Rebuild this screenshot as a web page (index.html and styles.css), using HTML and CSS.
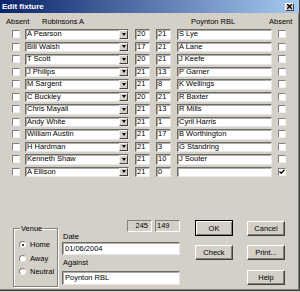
FILE: index.html
```html
<!DOCTYPE html>
<html>
  <head>
    <title>Edit fixture</title>
    <link rel="stylesheet" href="styles.css">
  </head>
  <body>
    <div class="dialog">
      <div class="titlebar">
        <span class="title">Edit fixture</span>
        <span class="close">
          <svg width="5" height="5" viewBox="0 0 5 5"><path d="M0 0L5 5M5 0L0 5" stroke="#000" stroke-width="1.4"/></svg>
        </span>
      </div>

      <div class="header">
        <span class="h-absent">Absent</span>
        <span class="h-home">Robinsons A</span>
        <span class="h-away">Poynton RBL</span>
        <span>Absent</span>
      </div>

      <!-- player rows -->
      <div class="rows">
        <div class="row"><span class="chk"></span><div class="combo field"><span class="combo-text">A Pearson</span><span class="arrow"></span></div><span class="score field">20</span><span class="score field">21</span><span class="name field">S Lye</span><span class="chk"></span></div>
        <div class="row"><span class="chk"></span><div class="combo field"><span class="combo-text">Bill Walsh</span><span class="arrow"></span></div><span class="score field">17</span><span class="score field">21</span><span class="name field">A Lane</span><span class="chk"></span></div>
        <div class="row"><span class="chk"></span><div class="combo field"><span class="combo-text">T Scott</span><span class="arrow"></span></div><span class="score field">20</span><span class="score field">21</span><span class="name field">J Keefe</span><span class="chk"></span></div>
        <div class="row"><span class="chk"></span><div class="combo field"><span class="combo-text">J Philips</span><span class="arrow"></span></div><span class="score field">21</span><span class="score field">13</span><span class="name field">P Garner</span><span class="chk"></span></div>
        <div class="row"><span class="chk"></span><div class="combo field"><span class="combo-text">M Sargent</span><span class="arrow"></span></div><span class="score field">21</span><span class="score field">8</span><span class="name field">K Wellings</span><span class="chk"></span></div>
        <div class="row"><span class="chk"></span><div class="combo field"><span class="combo-text">C Buckley</span><span class="arrow"></span></div><span class="score field">20</span><span class="score field">21</span><span class="name field">R Baxter</span><span class="chk"></span></div>
        <div class="row"><span class="chk"></span><div class="combo field"><span class="combo-text">Chris Mayall</span><span class="arrow"></span></div><span class="score field">21</span><span class="score field">13</span><span class="name field">R Mills</span><span class="chk"></span></div>
        <div class="row"><span class="chk"></span><div class="combo field"><span class="combo-text">Andy White</span><span class="arrow"></span></div><span class="score field">21</span><span class="score field">1</span><span class="name field">Cyril Harris</span><span class="chk"></span></div>
        <div class="row"><span class="chk"></span><div class="combo field"><span class="combo-text">William Austin</span><span class="arrow"></span></div><span class="score field">21</span><span class="score field">17</span><span class="name field">B Worthington</span><span class="chk"></span></div>
        <div class="row"><span class="chk"></span><div class="combo field"><span class="combo-text">H Hardman</span><span class="arrow"></span></div><span class="score field">21</span><span class="score field">3</span><span class="name field">G Standring</span><span class="chk"></span></div>
        <div class="row"><span class="chk"></span><div class="combo field"><span class="combo-text">Kenneth Shaw</span><span class="arrow"></span></div><span class="score field">21</span><span class="score field">10</span><span class="name field">J Souter</span><span class="chk"></span></div>
        <div class="row"><span class="chk"></span><div class="combo field"><span class="combo-text">A Ellison</span><span class="arrow"></span></div><span class="score field">21</span><span class="score field">0</span><span class="name field"></span><span class="chk"><svg width="6" height="6" viewBox="0 0 6 6"><path d="M0.5 2.5L2.2 4.3L5.5 0.8" fill="none" stroke="#000" stroke-width="1.3"/></svg></span></div>
      </div>

      <!-- venue, date and buttons -->
      <div class="bottom">
        <div class="group">
          <span class="legend">Venue</span>
          <div class="opt"><span class="radio on"></span>Home</div>
          <div class="opt"><span class="radio"></span>Away</div>
          <div class="opt"><span class="radio"></span>Neutral</div>
        </div>

        <div class="fields">
          <div class="totals">
            <span class="total home-total">245</span>
            <span class="total">149</span>
          </div>
          <div class="label date-label">Date</div>
          <div class="input date field">01/06/2004</div>
          <div class="label against-label">Against</div>
          <div class="input against field">Poynton RBL</div>
        </div>

        <div class="buttons">
          <span class="btn default">OK</span>
          <span class="btn">Cancel</span>
          <span class="btn">Check</span>
          <span class="btn">Print...</span>
          <span class="btn help">Help</span>
        </div>
      </div>
    </div>
  </body>
</html>
```

FILE: styles.css
```css
body {
  margin: 0;
  background: #d4d0c8;
  font-family: "Liberation Sans", Arial, sans-serif;
  font-size: 7.5px;
  color: #000;
}
.dialog {
  width: 300px;
  height: 291px;
  box-sizing: border-box;
  border-right: 1px solid #404040;
  border-bottom: 1px solid #404040;
  box-shadow: inset -1px -1px #808080;
}
.titlebar {
  height: 13px;
  display: flex;
  align-items: center;
  justify-content: space-between;
  padding: 0 5px 0 2px;
  background: linear-gradient(to right, #0a246a, #a6caf0);
}
.title {
  color: #fff;
  font-weight: bold;
  font-size: 8px;
}
.close {
  width: 9px;
  height: 8px;
  box-sizing: border-box;
  display: flex;
  align-items: center;
  justify-content: center;
  background: #d4d0c8;
  border: 1px solid;
  border-color: #fff #404040 #404040 #fff;
}
.header {
  height: 15px;
  display: flex;
  align-items: center;
  padding: 1px 0 0 6px;
  box-sizing: border-box;
}
.h-absent { width: 36px; }
.h-home { width: 149px; }
.h-away { width: 78px; }

.rows {
  display: flex;
  flex-direction: column;
}
.row {
  height: 12.5px;
  display: flex;
  align-items: center;
  padding-left: 12px;
}
.field {
  background: #fff;
  box-sizing: border-box;
  border: 1px solid;
  border-color: #6a6a6a #e8e8e8 #e8e8e8 #6a6a6a;
  box-shadow: inset 1px 1px #b0aca4;
  white-space: nowrap;
  overflow: hidden;
}
.chk {
  width: 8px;
  height: 8px;
  box-sizing: border-box;
  background: #fff;
  border: 1px solid;
  border-color: #808080 #f0f0f0 #f0f0f0 #808080;
  display: flex;
  align-items: center;
  justify-content: center;
}
.row .chk:last-child { margin-left: 6px; }
.combo {
  margin-left: 5px;
  width: 104px;
  height: 10.5px;
  display: flex;
}
.combo-text {
  flex: 1;
  padding-left: 1px;
  line-height: 8.5px;
}
.arrow {
  width: 9px;
  box-sizing: border-box;
  background: #d4d0c8;
  border: 1px solid;
  border-color: #f4f4f4 #404040 #404040 #f4f4f4;
  display: flex;
  align-items: center;
  justify-content: center;
}
.arrow::after {
  content: "";
  border-left: 2.5px solid transparent;
  border-right: 2.5px solid transparent;
  border-top: 3px solid #000;
}
.score {
  margin-left: 6px;
  width: 15px;
  height: 10.5px;
  padding-left: 1px;
  line-height: 8.5px;
}
.name {
  margin-left: 6px;
  width: 95px;
  height: 10.5px;
  padding-left: 1px;
  line-height: 8.5px;
}

.bottom {
  display: flex;
  align-items: flex-start;
  padding: 42px 0 0 13px;
}
.group {
  position: relative;
  margin-top: 8px;
  width: 45px;
  height: 59px;
  box-sizing: border-box;
  border: 1px solid #808080;
  box-shadow: 1px 1px #fff, inset 1px 1px #fff;
  padding: 9px 0 0 5px;
}
.legend {
  position: absolute;
  top: -5px;
  left: 6px;
  padding: 0 1px;
  line-height: 9px;
  background: #d4d0c8;
}
.opt {
  height: 13.5px;
  display: flex;
  align-items: center;
}
.radio {
  width: 7px;
  height: 7px;
  box-sizing: border-box;
  margin-right: 4px;
  border-radius: 50%;
  background: #fff;
  border: 1px solid;
  border-color: #808080 #f0f0f0 #f0f0f0 #808080;
  display: flex;
  align-items: center;
  justify-content: center;
}
.radio.on::after {
  content: "";
  width: 2px;
  height: 2px;
  border-radius: 50%;
  background: #000;
}
.fields {
  margin-left: 4px;
  width: 118px;
}
.totals {
  display: flex;
  justify-content: flex-end;
  gap: 3px;
  height: 11.5px;
}
.total {
  width: 25px;
  box-sizing: border-box;
  border: 1px solid;
  border-color: #808080 #fff #fff #808080;
  padding: 0 1px;
  line-height: 9.5px;
}
.home-total {
  text-align: right;
  padding-right: 3px;
}
.label {
  padding-left: 1px;
}
.date-label {
  height: 10.5px;
  line-height: 9px;
}
.against-label {
  height: 16px;
  line-height: 16px;
}
.input {
  padding-left: 2px;
}
.date {
  height: 13px;
  line-height: 11px;
}
.against {
  height: 14px;
  line-height: 12px;
}
.buttons {
  margin-left: 15px;
  display: grid;
  grid-template-columns: 38px 38px;
  grid-auto-rows: 16px;
  column-gap: 14px;
  row-gap: 8.5px;
}
.btn {
  box-sizing: border-box;
  height: 15px;
  align-self: center;
  display: flex;
  align-items: center;
  justify-content: center;
  background: #d4d0c8;
  border: 1px solid;
  border-color: #fff #404040 #404040 #fff;
  box-shadow: inset -1px -1px #808080;
}
.btn.default {
  height: 16px;
  border-color: #000;
  box-shadow: inset 1px 1px #fff, inset -1px -1px #808080;
}
.help {
  grid-column: 2;
}
```
